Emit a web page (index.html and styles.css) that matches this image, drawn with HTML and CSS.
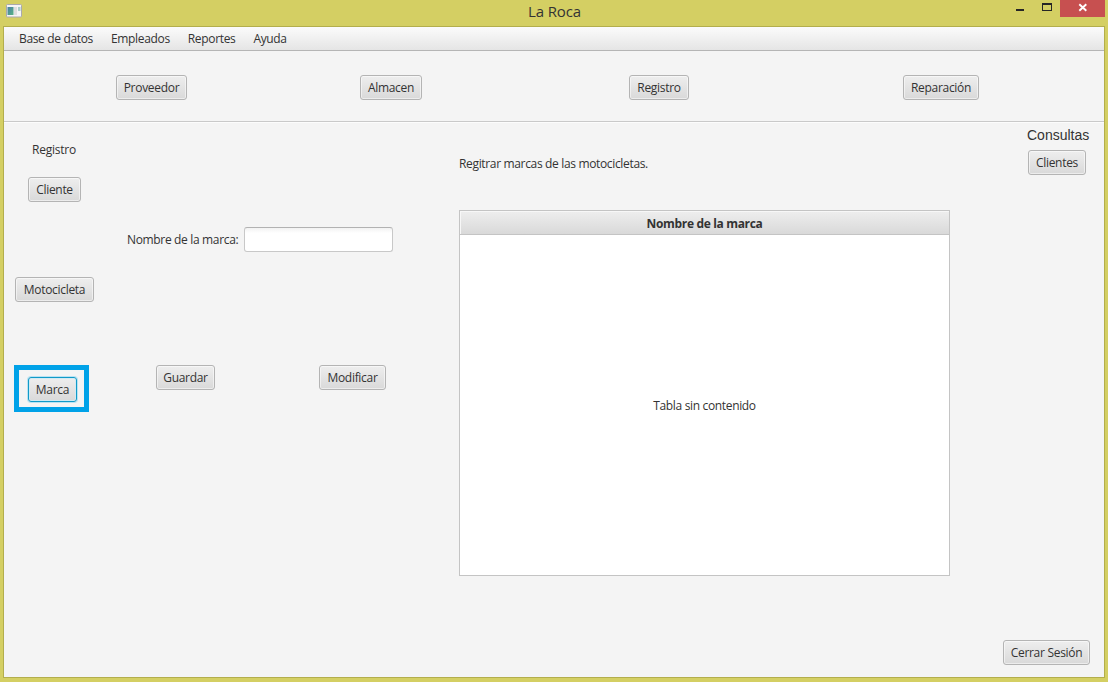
FILE: index.html
```html
<!DOCTYPE html>
<html lang="es">
<head>
<meta charset="utf-8">
<title>La Roca</title>
<link rel="stylesheet" href="styles.css">
</head>
<body>
<div class="window">
  <header class="titlebar">
    <svg class="app-icon" width="16" height="14" viewBox="0 0 16 14">
      <defs><linearGradient id="pane" x1="0" y1="0" x2="1" y2="1"><stop offset="0" stop-color="#4b7fa5"/><stop offset="1" stop-color="#58b383"/></linearGradient></defs>
      <rect x=".5" y=".5" width="15" height="12.500" rx="1" fill="#f5f5f5" stroke="#aaa9ad"/>
      <rect x="1.500" y="3" width="6" height="8" fill="url(#pane)"/>
      <rect x="8" y="3" width="3" height="8" fill="#dededf"/>
      <rect x="12" y="3" width="2.500" height="4" fill="#a9cdc8"/>
    </svg>
    <h1 class="title">La Roca</h1>
    <div class="controls">
      <svg class="control" width="60" height="17" viewBox="0 0 60 17" shape-rendering="crispEdges">
        <rect x="16" y="9" width="8" height="2" fill="#262626"/>
        <path d="M42 3h10v8H42zM43 5v5h8V5z" fill="#262626" fill-rule="evenodd"/>
      </svg>
      <svg class="close" width="45" height="17" viewBox="0 0 45 17">
        <path d="M19.300 4.200l7 6.600M26.300 4.200l-7 6.600" stroke="#fff" stroke-width="1.900"/>
      </svg>
    </div>
  </header>
  <div class="client">
    <nav class="menubar">
      <span class="menu-base">Base de datos</span><span class="menu-emp">Empleados</span><span class="menu-rep">Reportes</span><span class="menu-help">Ayuda</span>
    </nav>
    <div class="toolbar">
      <button class="btn proveedor">Proveedor</button>
      <button class="btn almacen">Almacen</button>
      <button class="btn registro">Registro</button>
      <button class="btn reparacion">Reparación</button>
    </div>
    <main class="content">
      <aside class="side">
        <span class="side-label">Registro</span>
        <button class="btn cliente">Cliente</button>
        <button class="btn motocicleta">Motocicleta</button>
        <div class="highlight"><button class="btn focused marca">Marca</button></div>
      </aside>
      <section class="form">
        <div class="field"><label class="field-label" for="brand">Nombre de la marca:</label><input class="input" id="brand" type="text"></div>
        <div class="actions">
          <button class="btn guardar">Guardar</button>
          <button class="btn modificar">Modificar</button>
        </div>
      </section>
      <section class="listing">
        <p class="intro"><span class="intro-text">Regitrar marcas de las motocicletas.</span></p>
        <div class="table">
          <div class="table-head"><span class="head-text">Nombre de la marca</span></div>
          <div class="table-body"><span class="empty-text">Tabla sin contenido</span></div>
        </div>
      </section>
      <aside class="queries">
        <span class="queries-label">Consultas</span>
        <button class="btn clientes">Clientes</button>
        <button class="btn cerrar">Cerrar Sesión</button>
      </aside>
    </main>
  </div>
</div>
</body>
</html>
```
FILE: styles.css
```css
* { box-sizing: border-box; }
body { margin: 0; }
.window {
  width: 1108px;
  height: 682px;
  padding: 0 3px 4px;
  background: #d4cf63;
  color: #333;
  font: 12px/16px "Open Sans", "Noto Sans", sans-serif;
  letter-spacing: -0.34px;
  white-space: nowrap;
  overflow: hidden;
}
.titlebar {
  display: grid;
  grid-template-columns: 105px 1fr 105px;
  height: 26px;
  margin-right: -1px;
}
.app-icon { margin: 4px 0 0 3px; }
.title {
  margin: 0;
  font-size: 15px;
  line-height: 22px;
  font-weight: 400;
  text-align: center;
  letter-spacing: -0.15px;
}
.controls { display: flex; margin-left: -1px; }
.close { background: #c75050; }
.client {
  display: flex;
  flex-direction: column;
  height: 652px;
  border: 1px solid #b3ae4c;
  background: #f4f4f4;
}
.menubar {
  display: flex;
  gap: 18px;
  height: 24px;
  padding: 4px 15px 0;
  background: linear-gradient(#fbfbfb, #e5e5e5);
  border-bottom: 1px solid #b5b5b5;
}
.toolbar {
  display: flex;
  height: 71px;
  padding: 24px 0 0 112px;
  border-bottom: 1px solid #c9c9c9;
  box-shadow: 0 1px #fcfcfc;
}
.btn {
  height: 25px;
  padding: 0;
  border: 1px solid #b4b4b4;
  border-radius: 3px;
  background: linear-gradient(#eeeeee, #d9d9d9);
  box-shadow: inset 0 0 0 1px rgba(255, 255, 255, .5);
  color: #333;
  font: inherit;
  line-height: 23px;
  letter-spacing: -0.3px;
  white-space: nowrap;
}
.proveedor { width: 71px; }
.almacen { width: 62px; margin-left: 173px; }
.registro { width: 60px; margin-left: 207px; }
.reparacion { width: 76px; margin-left: 214px; }
.content {
  flex: 1;
  display: grid;
  grid-template-columns: 112px 343px 491px 154px;
}
.side {
  display: flex;
  flex-direction: column;
  align-items: flex-start;
  padding: 20px 0 0 10px;
}
.side-label { margin-left: 18px; letter-spacing: -0.22px; }
.cliente { width: 53px; margin: 19px 0 0 14px; }
.motocicleta { width: 79px; margin: 75px 0 0 1px; }
.highlight {
  width: 75px;
  height: 47px;
  margin-top: 63px;
  padding: 7px 0 0 9px;
  border: 5px solid #00a2e8;
}
.marca { width: 49px; }
.focused {
  border-color: #119ac8;
  box-shadow: 0 0 0 1px #b9e3f3, inset 0 0 0 1px #d2eaf3;
}
.form { padding: 105px 0 0 11px; }
.field { display: flex; align-items: center; }
.field-label { width: 117px; }
.input {
  width: 149px;
  height: 25px;
  border: 1px solid #c8c8c8;
  border-top-color: #b2b2b2;
  border-radius: 3px;
  background: linear-gradient(#f2f2f2, #fff 5px);
  outline: none;
}
.actions { display: flex; margin: 113px 0 0 29px; }
.guardar { width: 59px; }
.modificar { width: 67px; margin-left: 104px; }
.listing { padding-top: 34px; }
.intro { margin: 0; }
.table {
  display: flex;
  flex-direction: column;
  height: 366px;
  margin-top: 38px;
  border: 1px solid #c4c4c4;
  background: #fff;
}
.table-head {
  height: 24px;
  border-bottom: 1px solid #c4c4c4;
  background: linear-gradient(#eeeeee, #d9d9d9);
  box-shadow: inset 1px 1px #f7f7f7;
  line-height: 25px;
  font-weight: 700;
  text-align: center;
}
.table-body { flex: 1; display: grid; place-items: center; padding-top: 2px; }
.queries {
  display: flex;
  flex-direction: column;
  align-items: flex-start;
  padding: 5px 0 12px 77px;
}
.queries-label { font: 14px/16px "Liberation Sans", Arial, sans-serif; letter-spacing: 0; }
.clientes { width: 58px; margin: 7px 0 0 1px; }
.cerrar { width: 87px; margin: auto 0 0 -24px; }
```
